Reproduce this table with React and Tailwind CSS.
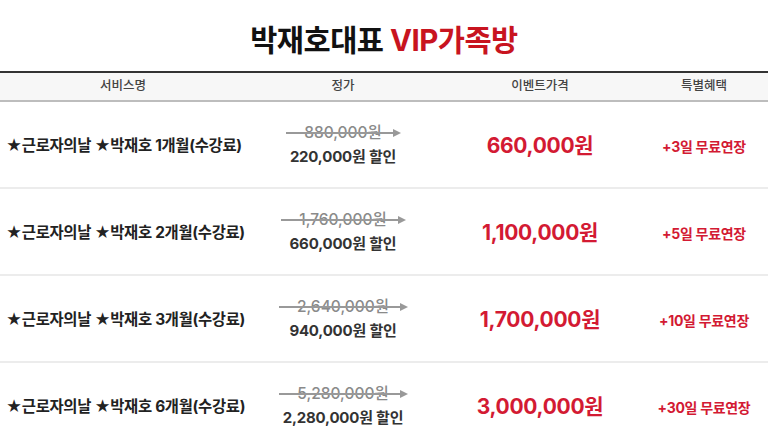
const rows = [
  { months: 1, list: "880,000원", off: "220,000원 할인", price: "660,000원", bonus: "+3일 무료연장" },
  { months: 2, list: "1,760,000원", off: "660,000원 할인", price: "1,100,000원", bonus: "+5일 무료연장" },
  { months: 3, list: "2,640,000원", off: "940,000원 할인", price: "1,700,000원", bonus: "+10일 무료연장" },
  { months: 6, list: "5,280,000원", off: "2,280,000원 할인", price: "3,000,000원", bonus: "+30일 무료연장" },
];

const cols = "grid grid-cols-[246px_194px_200px_1fr]";

const StrikePrice = ({ text }) => (
  <div className="relative inline-flex items-center px-[18px] text-[15.5px] leading-[20px] font-medium text-[#8a8a8a]">
    <span>{text}</span>
    <svg
      className="absolute left-0 top-1/2 -translate-y-1/2 w-full h-[10px]"
      viewBox="0 0 100 10"
      preserveAspectRatio="none"
    >
      <line x1="0" y1="5" x2="98" y2="5" stroke="#999" strokeWidth="2" />
    </svg>
    <svg className="absolute right-[-2px] top-1/2 -translate-y-1/2 w-[10px] h-[10px]" viewBox="0 0 10 10">
      <path d="M1 1 L9 5 L1 9 Z" fill="#999" />
    </svg>
  </div>
);

export default function App() {
  return (
    <div className="w-[768px] h-[439px] overflow-hidden bg-white font-['Inter','Noto_Sans_CJK_KR',sans-serif]">
      <div className="h-[71px] flex items-center justify-center pt-[10px]">
        <h1 className="text-[29.5px] font-bold tracking-[-0.5px] text-[#111]">
          박재호대표 <span className="text-[#c8141f]">VIP가족방</span>
        </h1>
      </div>

      <div className={`${cols} h-[31px] items-center bg-[#f7f7f7] border-t-2 border-[#333] border-b-2 border-b-[#bdbdbd] text-[12.5px] font-medium text-[#444]`}>
        <div className="text-center">서비스명</div>
        <div className="text-center">정가</div>
        <div className="text-center">이벤트가격</div>
        <div className="text-center">특별혜택</div>
      </div>

      {rows.map((r) => (
        <div key={r.months} className={`${cols} h-[87px] items-center border-b-2 border-[#ececec]`}>
          <div className="mt-[3px] pl-[6px] text-[15.4px] font-bold text-[#222] whitespace-nowrap tracking-[-0.3px]">
            ★근로자의날 ★박재호 {r.months}개월(수강료)
          </div>
          <div className="flex flex-col items-center">
            <StrikePrice text={r.list} />
            <div className="mt-[4px] text-[15px] font-bold text-[#333] leading-[20px] tracking-[-0.2px]">{r.off}</div>
          </div>
          <div className="mt-[3px] text-center text-[21px] font-bold text-[#d31a33] tracking-[-0.3px]">{r.price}</div>
          <div className="mt-[3px] text-center text-[14px] font-bold text-[#d31a33] tracking-[-0.3px]">{r.bonus}</div>
        </div>
      ))}
    </div>
  );
}
